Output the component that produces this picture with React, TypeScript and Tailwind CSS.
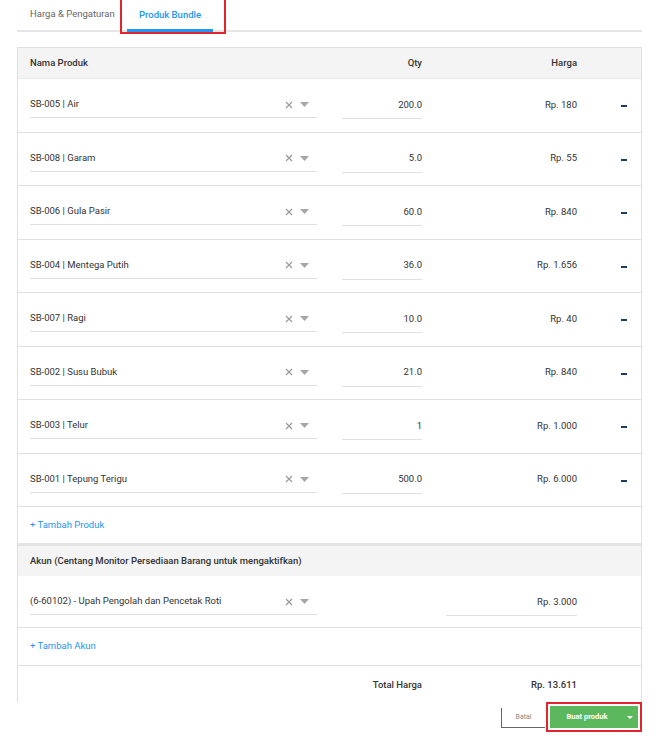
import React from "react";

const rows = [
  { name: "SB-005 | Air", qty: "200.0", harga: "Rp. 180" },
  { name: "SB-008 | Garam", qty: "5.0", harga: "Rp. 55" },
  { name: "SB-006 | Gula Pasir", qty: "60.0", harga: "Rp. 840" },
  { name: "SB-004 | Mentega Putih", qty: "36.0", harga: "Rp. 1.656" },
  { name: "SB-007 | Ragi", qty: "10.0", harga: "Rp. 40" },
  { name: "SB-002 | Susu Bubuk", qty: "21.0", harga: "Rp. 840" },
  { name: "SB-003 | Telur", qty: "1", harga: "Rp. 1.000" },
  { name: "SB-001 | Tepung Terigu", qty: "500.0", harga: "Rp. 6.000" },
];

function XIcon() {
  return (
    <svg width="8" height="8" viewBox="0 0 8 8" className="block">
      <path d="M1 1L7 7M7 1L1 7" stroke="#9a9a9a" strokeWidth="1.2" />
    </svg>
  );
}

function Caret({ color = "#a6a6a6" }: { color?: string }) {
  return (
    <svg width="9" height="5" viewBox="0 0 9 5" className="block">
      <path d="M0 0H9L4.5 5Z" fill={color} />
    </svg>
  );
}

function SelectField({ text }: { text: string }) {
  return (
    <div className="w-[287px] h-[26px] border-b border-[#e0e0e0] flex items-center justify-between">
      <span>{text}</span>
      <div className="flex items-center gap-[7px] pr-[8px]">
        <XIcon />
        <Caret />
      </div>
    </div>
  );
}

export default function App() {
  return (
    <div
      className="w-[672px] h-[741px] bg-white text-[#333] text-[9.5px] relative overflow-hidden"
      style={{ fontFamily: "Roboto, 'Liberation Sans', sans-serif" }}
    >
      {/* Tabs */}
      <div className="ml-[17px] w-[625px] h-[32px] border-b-2 border-[#e6e6e6] flex items-end">
        <div className="w-[110px] h-[30px] flex items-center pl-[13px] text-[#666] pb-[1px]">Harga &amp; Pengaturan</div>
        <div className="relative w-[86px] h-[30px] flex items-center justify-center text-[#2196f3] font-medium border-b-[3px] border-[#2196f3] mb-[-2px] pb-[1px]">
          Produk Bundle
          <div className="absolute left-[-7px] right-[-13px] top-[-26px] bottom-[-5px] border-2 border-[#e3262d]" />
        </div>
      </div>

      {/* Card */}
      <div className="ml-[17px] mt-[15px] w-[625px] border-l border-r border-t border-[#e0e0e0]">
        {/* header */}
        <div className="h-[31px] bg-[#f4f4f4] flex items-center pl-[12px] pt-[1px] font-medium border-b border-[#ececec]">
          <div className="w-[287px]">Nama Produk</div>
          <div className="w-[80px] ml-[25px] text-right">Qty</div>
          <div className="w-[155px] text-right">Harga</div>
        </div>

        {rows.map((r) => (
          <div key={r.name} className="h-[53.5px] border-b border-[#e0e0e0] flex items-start pl-[12px] pt-[13px]">
            <SelectField text={r.name} />
            <div className="w-[80px] ml-[25px] h-[27px] border-b border-[#e0e0e0] flex items-center justify-end">{r.qty}</div>
            <div className="w-[155px] h-[26px] flex items-center justify-end">{r.harga}</div>
            <div className="ml-[44px] h-[28px] flex items-center">
              <div className="w-[6px] h-[2px] bg-[#1d3b5c]" />
            </div>
          </div>
        ))}

        <div className="h-[39px] flex items-center pl-[12px] text-[#2196f3] border-b-[3px] border-[#e4e4e4]">+ Tambah Produk</div>

        <div className="h-[30px] bg-[#f4f4f4] flex items-center pl-[12px] font-medium">
          Akun (Centang Monitor Persediaan Barang untuk mengaktifkan)
        </div>

        <div className="h-[52px] border-b border-[#e0e0e0] flex items-start pl-[12px] pt-[13px]">
          <SelectField text="(6-60102) - Upah Pengolah dan Pencetak Roti" />
          <div className="w-[105px]" />
          <div className="w-[131px] ml-[24px] h-[27px] border-b border-[#e0e0e0] flex items-center justify-end">Rp. 3.000</div>
        </div>

        <div className="h-[38px] flex items-center pl-[12px] text-[#2196f3] border-b border-[#e0e0e0]">+ Tambah Akun</div>

        <div className="h-[36px] flex items-center pl-[12px] pt-[2px] font-medium">
          <div className="w-[287px]" />
          <div className="w-[80px] ml-[25px] text-right">Total Harga</div>
          <div className="w-[155px] text-right">Rp. 13.611</div>
        </div>
      </div>

      {/* Footer buttons */}
      <div className="ml-[501px] mt-[4px] flex items-start">
        <div className="mt-[2px] w-[44px] h-[20px] border-l border-b border-[#666] flex items-center justify-center text-[7px] text-[#888]">
          Batal
        </div>
        <div className="ml-[1px] mt-[-4px] p-[2px] border-2 border-[#e3262d]">
          <div className="w-[88px] h-[22px] bg-[#5cb85c] flex items-center text-white text-[7.5px] font-bold">
            <div className="flex-1 text-center pl-[2px]">Buat produk</div>
            <div className="w-[16px] flex items-center justify-center">
              <svg width="6" height="3" viewBox="0 0 6 3" className="block">
                <path d="M0 0H6L3 3Z" fill="#fff" />
              </svg>
            </div>
          </div>
        </div>
      </div>
    </div>
  );
}
